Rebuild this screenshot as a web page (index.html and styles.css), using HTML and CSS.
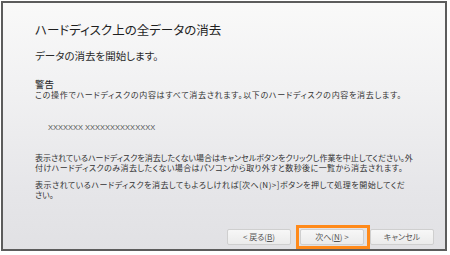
FILE: index.html
```html
<!DOCTYPE html>
<html lang="ja">
<head>
<meta charset="utf-8">
<link rel="stylesheet" href="styles.css">
</head>
<body>
<div class="frame">
  <div class="content">
    <h1 class="title">ハードディスク上の全データの消去</h1>
    <p class="subtitle">データの消去を開始します。</p>
    <h2 class="warn-head">警告</h2>
    <p class="text warn-text">この操作でハードディスクの内容はすべて消去されます。以下のハードディスクの内容を消去します。</p>
    <p class="disk">XXXXXXX XXXXXXXXXXXXXX</p>
    <p class="text para"><span class="line l1">表示されているハードディスクを消去したくない場合はキャンセルボタンをクリックし作業を中止してください。外</span><span class="line l2">付けハードディスクのみ消去したくない場合はパソコンから取り外すと数秒後に一覧から消去されます。</span></p>
    <p class="text para2"><span class="line l3">表示されているハードディスクを消去してもよろしければ[次へ(N)&gt;]ボタンを押して処理を開始してくだ</span><span class="line">さい。</span></p>
  </div>
  <div class="buttons">
    <button class="btn">&lt; 戻る(<u>B</u>)</button>
    <span class="next-wrap">
      <button class="btn">次へ(<u>N</u>) &gt;</button>
      <span class="highlight"></span>
    </span>
    <button class="btn">キャンセル</button>
  </div>
</div>
</body>
</html>
```

FILE: styles.css
```css
html, body {
  margin: 0;
  padding: 0;
  background: #ffffff;
}
body {
  font-family: "Noto Sans CJK JP", "Noto Sans", sans-serif;
  font-feature-settings: "palt";
  color: #2b2b2b;
}
.frame {
  margin: 1px 0 0 1px;
  width: 442px;
  height: 246px;
  border: 2px solid #5c5c5c;
  background: linear-gradient(to bottom, #f9f9f9 0%, #f1f1f2 35%, #e6e6e9 75%, #e1e1e4 100%);
  display: flex;
  flex-direction: column;
  justify-content: space-between;
}
.content {
  padding: 18px 0 0 32px;
}
.title {
  margin: 0;
  font-size: 12.5px;
  font-weight: normal;
  line-height: 18px;
  color: #1f1f1f;
}
.subtitle {
  margin: 10px 0 0 0;
  font-size: 10.5px;
  line-height: 14px;
  color: #2a2a2a;
}
.warn-head {
  margin: 16px 0 0 0;
  font-size: 9.5px;
  font-weight: normal;
  line-height: 11px;
  color: #222;
}
.text {
  margin: 0;
  font-size: 8px;
  line-height: 10px;
  color: #333;
  white-space: nowrap;
}
.warn-text {
  letter-spacing: 0.7px;
}
.line {
  display: block;
}
.l1 {
  letter-spacing: 0;
}
.l2 {
  letter-spacing: 0.43px;
}
.l3 {
  letter-spacing: 0.48px;
}
.disk {
  margin: 23px 0 0 13px;
  font-family: "Liberation Sans", sans-serif;
  font-size: 7.5px;
  line-height: 10px;
  color: #555;
}
.para {
  margin-top: 20px;
}
.para2 {
  margin-top: 7px;
}
.buttons {
  display: flex;
  justify-content: flex-end;
  align-items: center;
  padding: 0 11px 4px 0;
}
.btn {
  display: block;
  width: 64px;
  height: 16px;
  padding: 0;
  border: 1px solid #cfcfcf;
  border-radius: 2px;
  background: linear-gradient(to bottom, #f7f7f7, #ebebeb);
  font-family: "Noto Sans CJK JP", "Noto Sans", sans-serif;
  font-feature-settings: "palt";
  font-size: 8px;
  color: #555;
  line-height: 14px;
}
.next-wrap {
  position: relative;
  display: flex;
  margin: 0 6px 0 9px;
}
.highlight {
  position: absolute;
  left: -4px;
  top: -4px;
  right: -6px;
  bottom: -4px;
  border: 3px solid #ff8a1a;
}
```
